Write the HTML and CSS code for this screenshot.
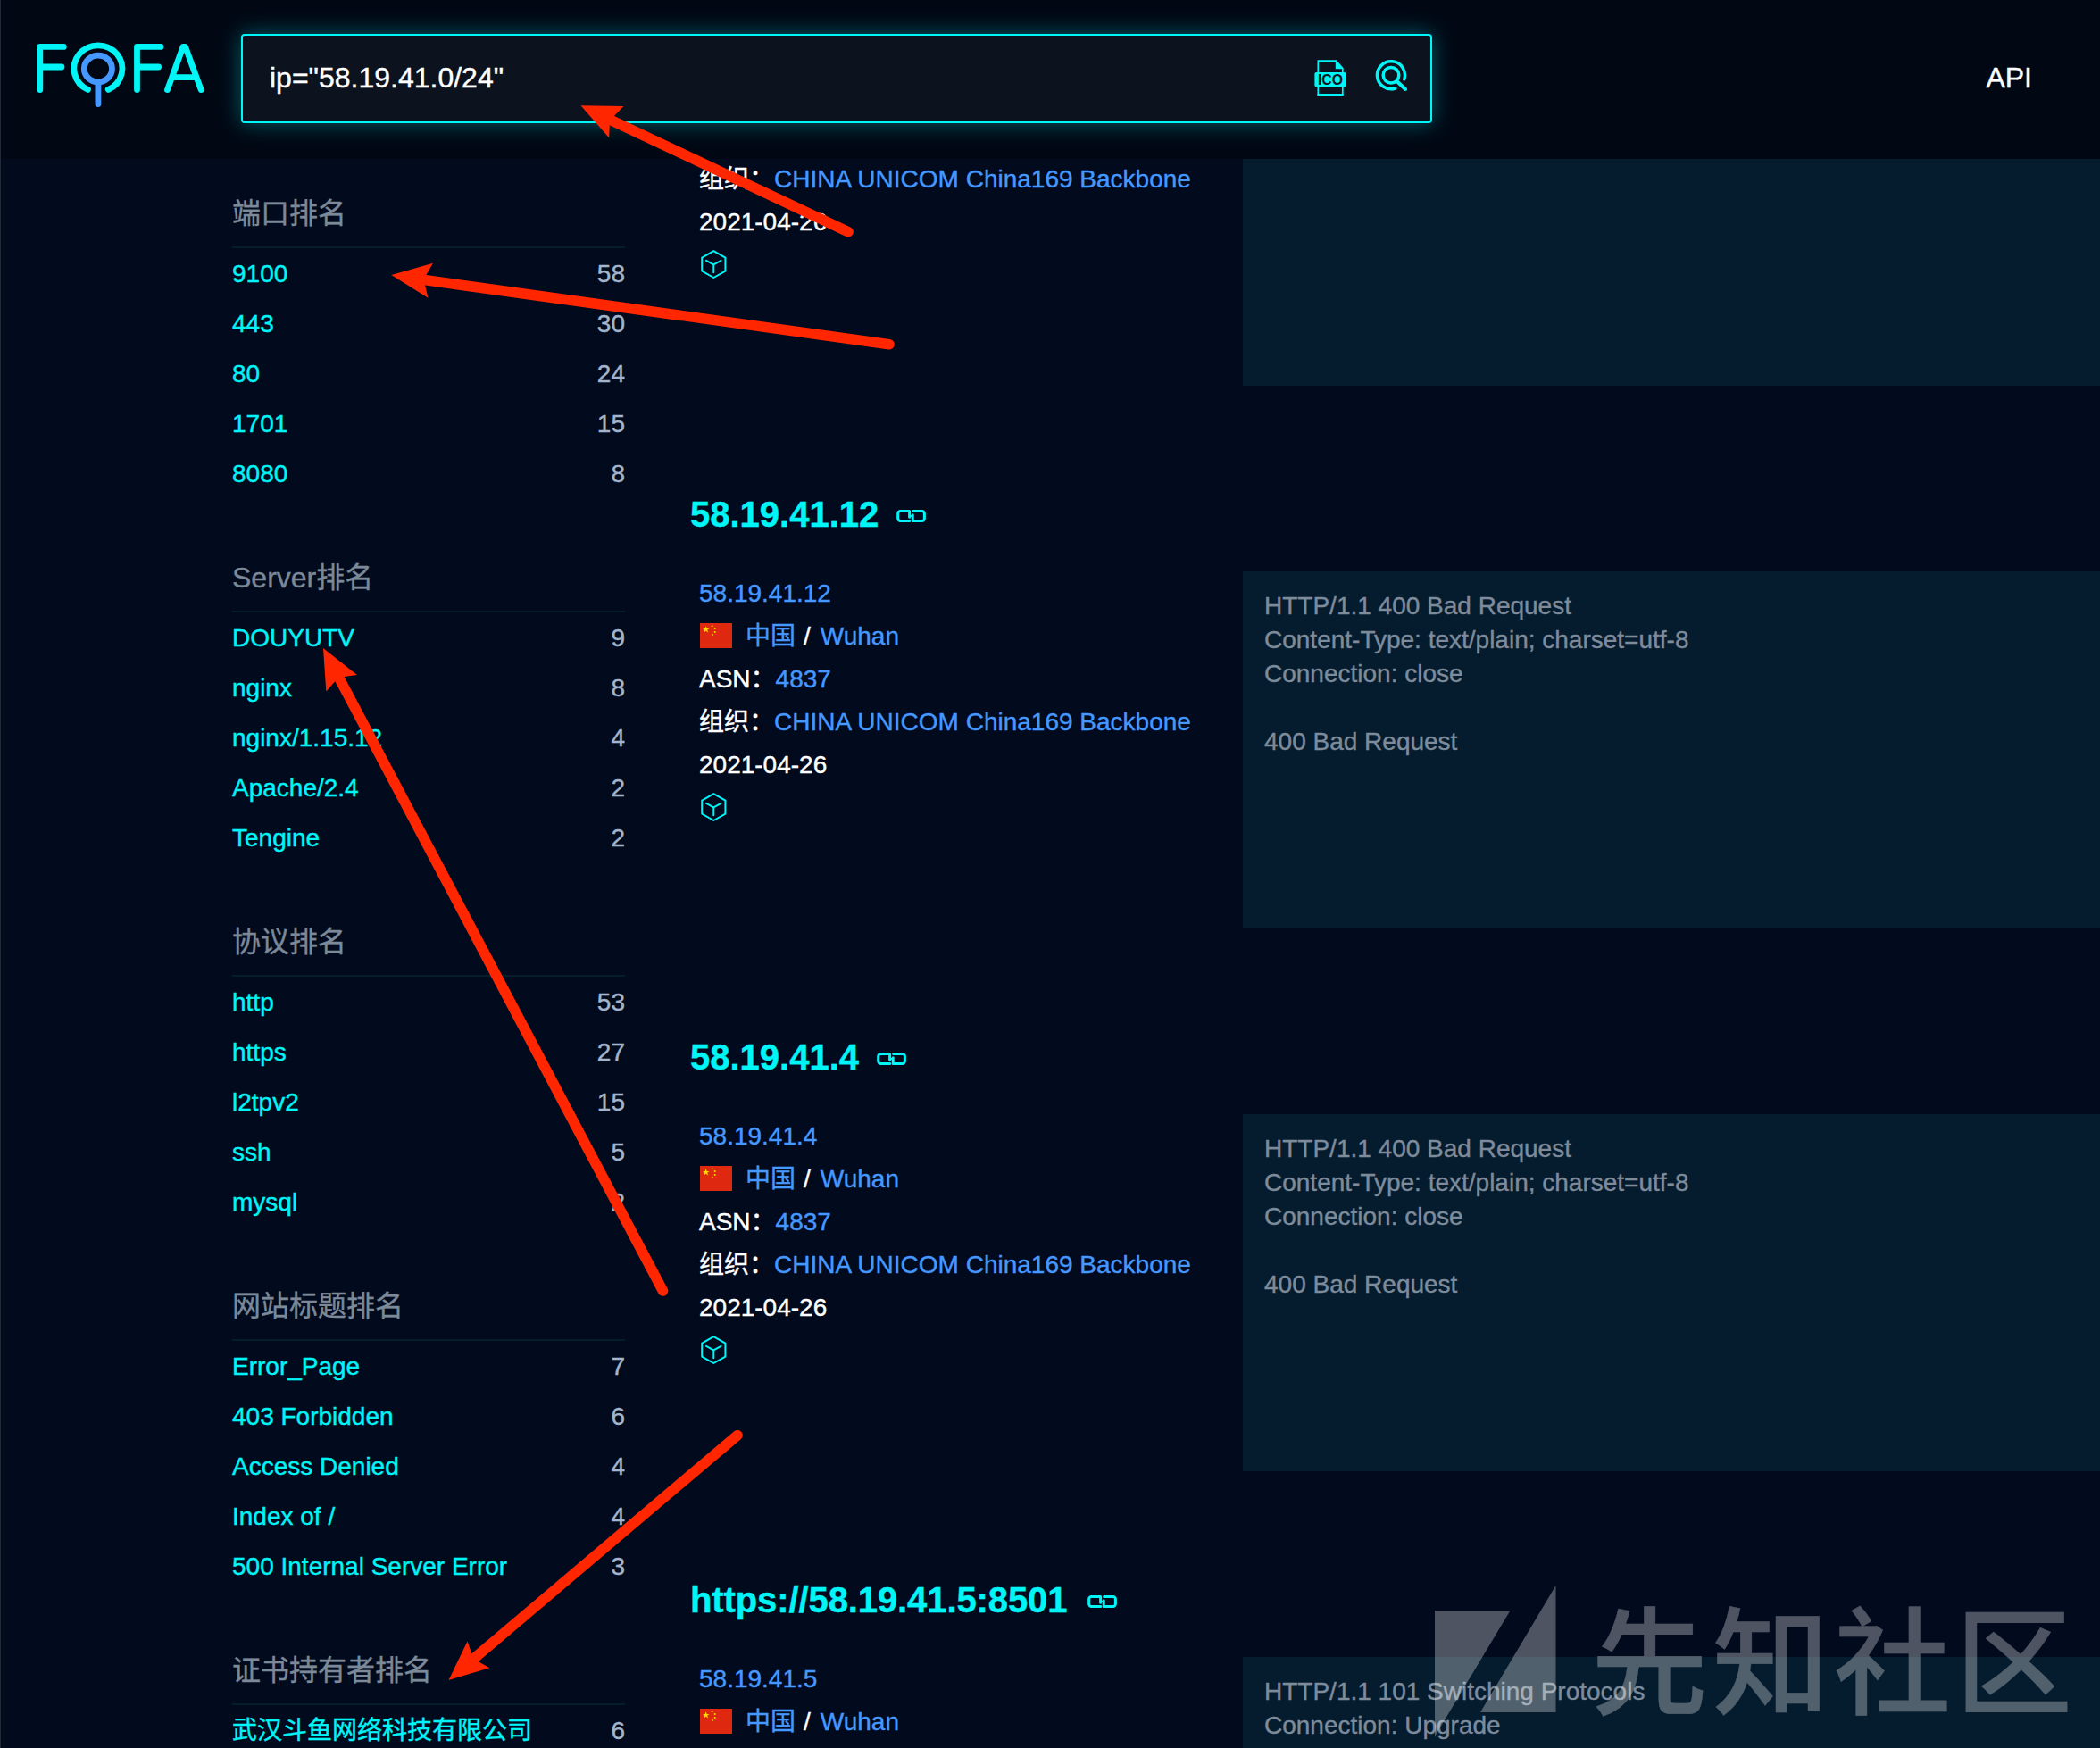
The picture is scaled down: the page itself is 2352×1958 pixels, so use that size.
FILE: index.html
```html
<!DOCTYPE html>
<html lang="zh-CN">
<head>
<meta charset="utf-8">
<title>FOFA</title>
<link rel="stylesheet" href="styles.css">
</head>
<body>
<svg class="defs" aria-hidden="true">
  <symbol id="link" viewBox="0 0 34 16">
    <g fill="none" stroke="currentColor" stroke-width="3" stroke-linejoin="round" stroke-linecap="round">
      <path d="M14.6 9.200V2.6H4.4a2.7 2.7 0 0 0-2.7 2.7v5.4a2.7 2.7 0 0 0 2.7 2.7h10.4"/>
      <path d="M18.2 6.800v6.600h10.5a2.7 2.7 0 0 0 2.7-2.7V5.300a2.7 2.7 0 0 0-2.700-2.700H18.600"/>
      <path d="M14.6 8.600L18.200 7.400" stroke-width="2"/>
    </g>
  </symbol>
  <symbol id="cube" viewBox="0 0 30 34">
    <g fill="none" stroke="currentColor" stroke-width="2" stroke-linejoin="round" stroke-linecap="round">
      <path d="M15.3 2.2 28.4 9.6v15L15.3 32 2.2 24.6v-15z"/>
      <path d="M7 12.8l8.3 4.5 8.3-4.5M15.3 17.3v9"/>
    </g>
  </symbol>
  <symbol id="flag" viewBox="0 0 36 28">
    <rect width="36" height="28" fill="#de2910"/>
    <g fill="#ffde00">
      <path d="M6.7 3.2l.95 2.7h2.85L8.2 7.6l.85 2.8-2.35-1.7-2.35 1.7.85-2.8-2.3-1.7h2.85z"/>
      <circle cx="13.6" cy="3.3" r="1"/><circle cx="16.7" cy="5.9" r="1"/>
      <circle cx="16.7" cy="10.1" r="1"/><circle cx="13.9" cy="13.1" r="1"/>
    </g>
  </symbol>
</svg>

<header class="header">
  <svg class="logo" viewBox="40 44 192 80" role="img" aria-label="FOFA">
    <g fill="none" stroke-width="6.8" stroke-linecap="round" stroke-linejoin="round">
      <g stroke="#00f5f6">
        <path d="M71.3 52.4H44.8V100.6M44.8 75H69"/>
        <path d="M98.5 100.4A27 26 0 1 1 121.3 100.4"/>
        <path d="M180 52.4H153.5V100.6M153.5 75H177.6"/>
        <path d="M187.5 100.6L205 52.4H207.6L225.2 100.6M193 86.7H220"/>
      </g>
      <g stroke="#4598ff">
        <ellipse cx="109.9" cy="77" rx="15.6" ry="14.8"/>
        <path d="M109.9 92V116.6"/>
      </g>
    </g>
  </svg>
  <div class="search">
    <span class="query">ip="58.19.41.0/24"</span>
    <svg class="search-icon" viewBox="0 0 36 44">
      <path d="M4.3 2.2H24.5L31.8 10.5V40.2H4.3z" fill="none" stroke="#00f5f6" stroke-width="1.7"/>
      <path d="M23.8 1.5V11.2H32.6z" fill="#00f5f6"/>
      <rect x="3.5" y="39" width="29" height="2.3" fill="#00f5f6"/>
      <rect x=".4" y="15" width="35.2" height="16.3" rx="1.8" fill="#00f5f6"/>
      <text x="18" y="29.2" class="ico-label" textLength="28" lengthAdjust="spacingAndGlyphs">ICO</text>
    </svg>
    <svg class="search-icon" viewBox="0 0 36 44">
      <g fill="none" stroke="#00f5f6" stroke-width="3.5" stroke-linecap="round">
        <path d="M32.8 22.8A15.5 15.5 0 1 0 22.8 33"/>
        <circle cx="18" cy="18.3" r="8.8"/>
        <path d="M25 25.5L34 34" stroke-width="4"/>
      </g>
    </svg>
  </div>
  <nav class="nav"><a>API</a></nav>
</header>

<main class="main">
  <aside class="sidebar">
    <section class="rank">
      <h3>端口排名</h3>
      <ul>
        <li><a>9100</a><span>58</span></li>
        <li><a>443</a><span>30</span></li>
        <li><a>80</a><span>24</span></li>
        <li><a>1701</a><span>15</span></li>
        <li><a>8080</a><span>8</span></li>
      </ul>
    </section>
    <section class="rank">
      <h3>Server排名</h3>
      <ul>
        <li><a>DOUYUTV</a><span>9</span></li>
        <li><a>nginx</a><span>8</span></li>
        <li><a>nginx/1.15.12</a><span>4</span></li>
        <li><a>Apache/2.4</a><span>2</span></li>
        <li><a>Tengine</a><span>2</span></li>
      </ul>
    </section>
    <section class="rank">
      <h3>协议排名</h3>
      <ul>
        <li><a>http</a><span>53</span></li>
        <li><a>https</a><span>27</span></li>
        <li><a>l2tpv2</a><span>15</span></li>
        <li><a>ssh</a><span>5</span></li>
        <li><a>mysql</a><span>2</span></li>
      </ul>
    </section>
    <section class="rank">
      <h3>网站标题排名</h3>
      <ul>
        <li><a>Error_Page</a><span>7</span></li>
        <li><a>403 Forbidden</a><span>6</span></li>
        <li><a>Access Denied</a><span>4</span></li>
        <li><a>Index of /</a><span>4</span></li>
        <li><a>500 Internal Server Error</a><span>3</span></li>
      </ul>
    </section>
    <section class="rank">
      <h3>证书持有者排名</h3>
      <ul>
        <li><a>武汉斗鱼网络科技有限公司</a><span>6</span></li>
      </ul>
    </section>
  </aside>

  <div class="results">
    <article class="result result-cut">
      <div class="result-body">
        <div class="meta">
          <p>组织：<a>CHINA UNICOM China169 Backbone</a></p>
          <p>2021-04-26</p>
          <p><svg class="cube"><use href="#cube"/></svg></p>
        </div>
        <pre class="banner"></pre>
      </div>
    </article>

    <article class="result">
      <h2>58.19.41.12<svg class="link"><use href="#link"/></svg></h2>
      <div class="result-body">
        <div class="meta">
          <p><a>58.19.41.12</a></p>
          <p><svg class="flag"><use href="#flag"/></svg><a>中国</a><span class="slash">/</span><a>Wuhan</a></p>
          <p>ASN：<a>4837</a></p>
          <p>组织：<a>CHINA UNICOM China169 Backbone</a></p>
          <p>2021-04-26</p>
          <p><svg class="cube"><use href="#cube"/></svg></p>
        </div>
        <pre class="banner">HTTP/1.1 400 Bad Request
Content-Type: text/plain; charset=utf-8
Connection: close

400 Bad Request</pre>
      </div>
    </article>

    <article class="result">
      <h2>58.19.41.4<svg class="link"><use href="#link"/></svg></h2>
      <div class="result-body">
        <div class="meta">
          <p><a>58.19.41.4</a></p>
          <p><svg class="flag"><use href="#flag"/></svg><a>中国</a><span class="slash">/</span><a>Wuhan</a></p>
          <p>ASN：<a>4837</a></p>
          <p>组织：<a>CHINA UNICOM China169 Backbone</a></p>
          <p>2021-04-26</p>
          <p><svg class="cube"><use href="#cube"/></svg></p>
        </div>
        <pre class="banner">HTTP/1.1 400 Bad Request
Content-Type: text/plain; charset=utf-8
Connection: close

400 Bad Request</pre>
      </div>
    </article>

    <article class="result">
      <h2 class="url">https://58.19.41.5:8501<svg class="link"><use href="#link"/></svg></h2>
      <div class="result-body">
        <div class="meta">
          <p><a>58.19.41.5</a></p>
          <p><svg class="flag"><use href="#flag"/></svg><a>中国</a><span class="slash">/</span><a>Wuhan</a></p>
        </div>
        <pre class="banner">HTTP/1.1 101 Switching Protocols
Connection: Upgrade</pre>
      </div>
    </article>
  </div>
</main>

<div class="watermark">
  <svg viewBox="0 0 136 170"><path d="M0 28H84.5L0 169zM135.5 0V142H51z"/></svg>
  <span>先知社区</span>
</div>

<svg class="arrows" viewBox="0 0 2352 1958" aria-hidden="true">
  <g stroke-width="11.6" stroke-linecap="round">
    <path d="M682 133.500L950 259.700M470 312.800L996 385.700M378 756L742.500 1446M527 1861L826 1607.700"/>
  </g>
  <g stroke="none">
    <path d="M650.500 118.300L698.500 119 687.900 130 682.800 140 682.200 154.500z"/>
    <path d="M438.300 308L485 294.800 477.300 308 476 319.300 479.500 333.700z"/>
    <path d="M362 726L400 756 385.300 758 375.300 763.300 365.300 774.500z"/>
    <path d="M502.500 1882L523.500 1838.500 528.300 1852.300 535.800 1861.300 548.500 1868.300z"/>
  </g>
</svg>
</body>
</html>
```

FILE: styles.css
```css
* {
  box-sizing: border-box;
  margin: 0;
  padding: 0;
}

body {
  position: relative;
  width: 2352px;
  height: 1958px;
  overflow: hidden;
  background: #020a1e;
  color: #fff;
  font-family: "Liberation Sans", "Noto Sans CJK SC", sans-serif;
  font-size: 28px;
  -webkit-text-stroke: 0.4px currentColor;
  box-shadow: inset 1px 0 #232a38;
}

.defs {
  position: absolute;
  width: 0;
  height: 0;
}

.header {
  display: flex;
  align-items: flex-start;
  height: 178px;
  padding: 38px 76px 0 40px;
  background: #010814;
  box-shadow: inset 1px 0 #232a38;
}

.logo {
  width: 192px;
  height: 80px;
  margin: 6px 38px 0 0;
}

.search {
  display: flex;
  align-items: center;
  gap: 32px;
  width: 1334px;
  height: 100px;
  padding: 0 26px 0 30px;
  border: 2px solid #00f5f6;
  border-radius: 4px;
  background: #0d131e;
  box-shadow: 0 0 24px rgba(0, 245, 246, 0.36);
}

.query {
  flex: 1;
  font-size: 32px;
  line-height: 36px;
  padding-bottom: 2px;
}

.search-icon {
  width: 36px;
  height: 44px;
}

.ico-label {
  fill: #0d131e;
  font-size: 17px;
  font-weight: 700;
  text-anchor: middle;
  -webkit-text-stroke: 0;
}

.nav {
  margin-left: auto;
  font-size: 32px;
  line-height: 98px;
}

.main {
  display: flex;
  height: 1780px;
  overflow: hidden;
}

.sidebar {
  flex: none;
  width: 440px;
  margin-left: 260px;
  padding-top: 36px;
}

.rank {
  margin-bottom: 64px;
}

.rank h3 {
  height: 64px;
  border-bottom: 2px solid #061d2d;
  color: #7b8998;
  font-size: 32px;
  font-weight: 400;
  line-height: 50px;
}

.rank ul {
  list-style: none;
}

.rank li {
  display: flex;
  justify-content: space-between;
  height: 56px;
  line-height: 58px;
  color: #a3b5cc;
}

.rank a {
  color: #00f5f6;
}

.results {
  flex: 1;
  margin-left: 72px;
}

.result {
  margin-bottom: 116px;
}

.result h2 {
  display: flex;
  align-items: center;
  height: 56px;
  margin-bottom: 36px;
  padding-left: 1px;
  color: #00f5f6;
  font-size: 40px;
  font-weight: 700;
  line-height: 56px;
}

.result .url {
  letter-spacing: -0.1px;
}

.link {
  width: 34px;
  height: 16px;
  margin: 4px 0 0 20px;
}

.url .link {
  margin-left: 23px;
}

.result-body {
  display: grid;
  grid-template-columns: 609px 1fr;
  height: 400px;
  padding-left: 11px;
}

.result-cut .result-body {
  height: 254px;
}

.result-cut .meta {
  margin-top: -2px;
}

.meta p {
  display: flex;
  align-items: center;
  height: 48px;
  padding-top: 2px;
  line-height: 46px;
  white-space: nowrap;
}

.meta a {
  color: #4598ff;
}

.flag {
  width: 36px;
  height: 28px;
  margin: -2px 15px 0 1px;
}

.slash {
  margin: 0 11px 0 9px;
}

.cube {
  width: 30px;
  height: 34px;
  margin: -2px 0 0 1px;
  color: #00f5f6;
}

.banner {
  padding: 20px 24px 0;
  background: #051b2e;
  color: #7d8b9b;
  font-family: inherit;
  line-height: 38px;
}

.watermark {
  position: absolute;
  left: 1607px;
  top: 1776px;
  display: flex;
  color: #fff;
  opacity: 0.3;
}

.watermark svg {
  width: 136px;
  height: 170px;
  fill: currentColor;
}

.watermark span {
  margin-left: 39px;
  font-family: "Noto Sans CJK SC", sans-serif;
  font-size: 131px;
  font-weight: 500;
  letter-spacing: 5px;
  line-height: 154px;
  white-space: nowrap;
}

.arrows {
  position: absolute;
  inset: 0;
  width: 2352px;
  height: 1958px;
  fill: #ff2600;
  stroke: #ff2600;
}
```
